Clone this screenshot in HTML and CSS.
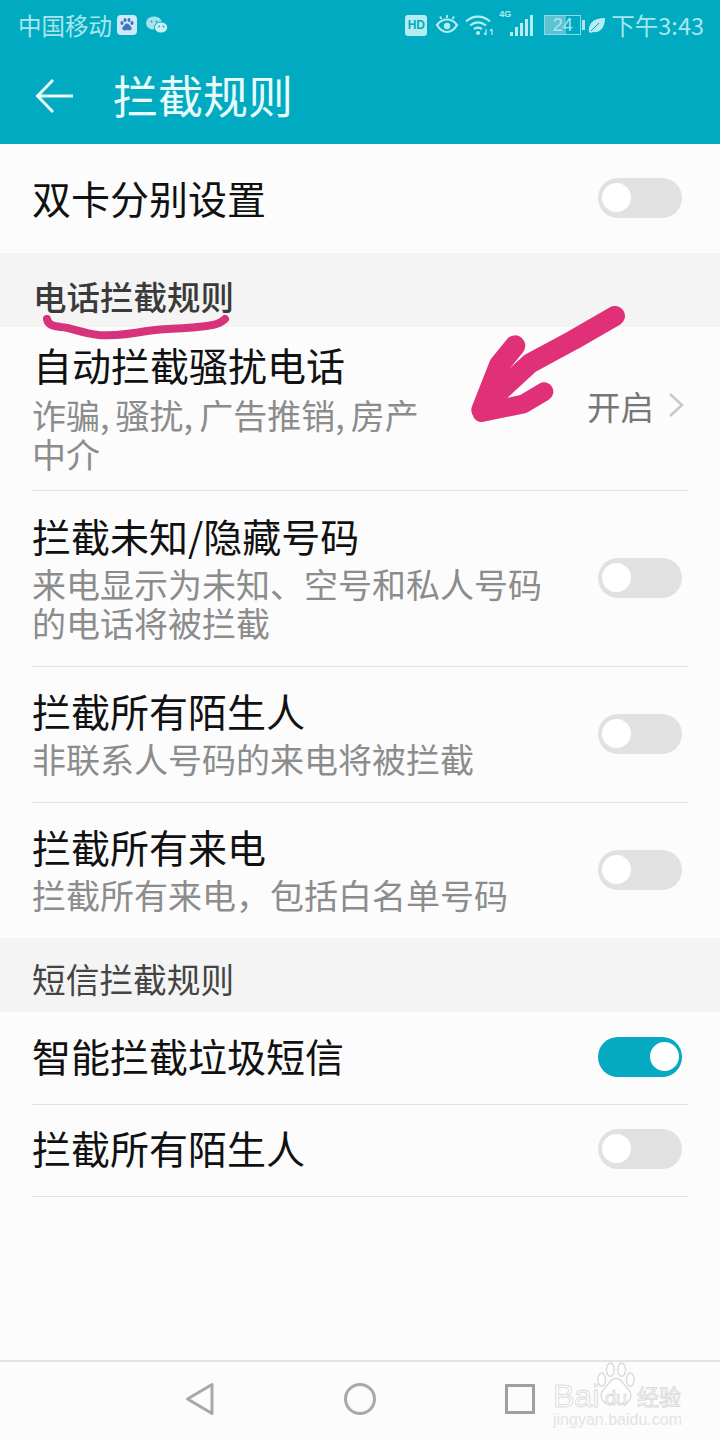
FILE: index.html
```html
<!DOCTYPE html>
<html lang="zh-CN">
<head>
  <meta charset="UTF-8">
  <title>拦截规则</title>
  <link rel="stylesheet" href="styles.css">
</head>
<body>

  <div class="phone">
    <header class="appbar">
      <div class="status">
        <div class="status-left">
          <span class="carrier">中国移动</span>
          <svg class="ic-baidu" width="20" height="20" viewBox="0 0 20 20">
            <rect width="20" height="20" rx="4" fill="#cfeaf6"/>
            <g fill="#3f74c4">
              <ellipse cx="5" cy="8" rx="1.6" ry="2.1"/>
              <ellipse cx="8" cy="5" rx="1.5" ry="2.1"/>
              <ellipse cx="12" cy="5" rx="1.5" ry="2.1"/>
              <ellipse cx="15" cy="8" rx="1.6" ry="2.1"/>
              <path d="M10 8.5c-2 0-2.5 2-4 3.2-1.3 1.2-.6 3.8 1.6 3.6 1 0 1.6-.4 2.4-.4s1.4.4 2.4.4c2.2.2 2.9-2.4 1.6-3.6-1.5-1.2-2-3.2-4-3.2z"/>
            </g>
          </svg>
          <svg class="ic-wechat" width="22" height="18" viewBox="0 0 22 18">
            <ellipse cx="8" cy="7" rx="8" ry="6.6" fill="#a7e3ea"/>
            <ellipse cx="15" cy="11.5" rx="6.6" ry="5.6" fill="#c9eff3" stroke="#00abc1" stroke-width="1"/>
            <circle cx="5.5" cy="5.5" r="1" fill="#00abc1"/>
            <circle cx="10.5" cy="5.5" r="1" fill="#00abc1"/>
            <circle cx="13" cy="10.5" r=".9" fill="#00abc1"/>
            <circle cx="17.5" cy="10.5" r=".9" fill="#00abc1"/>
          </svg>
        </div>
        <div class="status-right">
          <span class="hd">HD</span>
          <svg width="24" height="22" viewBox="0 0 24 22" fill="none" stroke="#b5ecf2" stroke-width="2.2">
            <path d="M2 11c3-4 6-5.500 10-5.500S19 7 22 11c-3 5-6 7-10 7s-7-2-10-7z"/>
            <circle cx="12" cy="12" r="3.200" fill="#b5ecf2" stroke="none"/>
            <path d="M12 1v3M5 2.500l1.500 2.500M19 2.500L17.500 5" stroke-width="1.800"/>
          </svg>
          <svg class="ic-wifi" width="28" height="22" viewBox="0 0 28 22" fill="none" stroke="#b5ecf2" stroke-width="2.200">
            <path d="M1 7.500c7-6.500 17-6.500 24 0"/>
            <path d="M5 11.500c5-4 11-4 16 0"/>
            <path d="M9 15c3-2 5-2 8 0"/>
            <circle cx="13" cy="19" r="2" fill="#b5ecf2" stroke="none"/>
            <path d="M21 15v6M19 19l2 2M27 15v6M25 17l2-2" stroke-width="1.200"/>
          </svg>
          <span class="net">
            <span class="net-g">4G</span>
            <svg width="24" height="22" viewBox="0 0 24 22" fill="#b5ecf2">
              <rect x="0" y="18" width="3" height="4"/>
              <rect x="5" y="13" width="3" height="9"/>
              <rect x="10" y="9" width="3" height="13"/>
              <rect x="15" y="5" width="3" height="17"/>
              <rect x="20" y="1" width="3" height="21"/>
            </svg>
          </span>
          <span class="battery"><span class="battery-num">24</span></span>
          <svg class="ic-leaf" width="18" height="18" viewBox="0 0 18 18">
            <path d="M1 16C0 8 5 2 17 2c0 10-5 15-12 14l-2 1z" fill="#b5ecf2"/>
            <path d="M3 15L11 7" stroke="#00abc1" stroke-width="1"/>
          </svg>
          <span class="clock">下午3:43</span>
        </div>
      </div>
      <div class="toolbar">
        <svg class="back" width="40" height="36" viewBox="0 0 40 36" fill="none" stroke="#e8fafc" stroke-width="3">
          <path d="M38 18H3M18 2L2.500 18 18 34"/>
        </svg>
        <h1>拦截规则</h1>
      </div>
    </header>

    <main class="list">
      <div class="row row-solo">
        <div class="row-title">双卡分别设置</div>
        <span class="switch"></span>
      </div>

      <div class="section section-first">电话拦截规则</div>

      <div class="row row-auto line">
        <div class="row-text">
          <div class="row-title">自动拦截骚扰电话</div>
          <div class="row-sub">诈骗, 骚扰, 广告推销, 房产<br>中介</div>
        </div>
        <div class="row-value">
          开启
          <svg width="16" height="26" viewBox="0 0 16 26" fill="none" stroke="#c8c8c8" stroke-width="2.500">
            <path d="M2 2l12 11L2 24"/>
          </svg>
        </div>
      </div>
      <div class="row row-two line">
        <div class="row-text">
          <div class="row-title">拦截未知/隐藏号码</div>
          <div class="row-sub">来电显示为未知、空号和私人号码<br>的电话将被拦截</div>
        </div>
        <span class="switch"></span>
      </div>
      <div class="row row-one line">
        <div class="row-text">
          <div class="row-title">拦截所有陌生人</div>
          <div class="row-sub">非联系人号码的来电将被拦截</div>
        </div>
        <span class="switch"></span>
      </div>
      <div class="row row-one row-last">
        <div class="row-text">
          <div class="row-title">拦截所有来电</div>
          <div class="row-sub">拦截所有来电，包括白名单号码</div>
        </div>
        <span class="switch"></span>
      </div>

      <div class="section section-sms">短信拦截规则</div>

      <div class="row row-plain line">
        <div class="row-title">智能拦截垃圾短信</div>
        <span class="switch on"></span>
      </div>
      <div class="row row-plain line">
        <div class="row-title">拦截所有陌生人</div>
        <span class="switch"></span>
      </div>
    </main>

    <nav class="navbar">
      <svg width="30" height="34" viewBox="0 0 30 34" fill="none" stroke="#a8a8a8" stroke-width="3" stroke-linejoin="round">
        <path d="M27 2.500v29L2.500 17z"/>
      </svg>
      <svg width="34" height="34" viewBox="0 0 34 34" fill="none" stroke="#a8a8a8" stroke-width="3">
        <circle cx="17" cy="17" r="14.500"/>
      </svg>
      <svg width="30" height="30" viewBox="0 0 30 30" fill="none" stroke="#a0a0a0" stroke-width="3">
        <rect x="1.500" y="1.500" width="27" height="27"/>
      </svg>
    </nav>

    <!-- pen marks drawn on top of the screenshot -->
    <svg class="marks" width="720" height="1440" viewBox="0 0 720 1440">
      <path d="M47 319c1 6 6 7 14 8 12 1 20 6 38 8 18 1 32-1 48-4 20-3 34-2 50-4 12-1 22-2 28-8" fill="none" stroke="#d6337c" stroke-width="8" stroke-linecap="round" stroke-linejoin="round"/>
      <g transform="translate(440 290) scale(.3333)" fill="none" stroke="#e03078" stroke-linecap="round" stroke-linejoin="round">
        <path d="M525 78L400 150 270 220 135 345" stroke-width="60"/>
        <path d="M225 167L178 225 125 360" stroke-width="62"/>
        <path d="M312 305L250 342 125 368" stroke-width="56"/>
      </g>
    </svg>

    <div class="watermark">
      <svg class="paw" width="40" height="46" viewBox="0 0 42 42" preserveAspectRatio="none" fill="#fff" stroke="#dcdcdc" stroke-width="1.500">
        <ellipse cx="6" cy="16" rx="4" ry="6"/>
        <ellipse cx="15" cy="7" rx="4" ry="6"/>
        <ellipse cx="27" cy="7" rx="4" ry="6"/>
        <ellipse cx="36" cy="16" rx="4" ry="6"/>
        <path d="M21 15c-6 0-8 6-13 10-5 5-2 13 6 13 3 0 5-1 7-1s4 1 7 1c8 0 11-8 6-13-5-4-7-10-13-10z"/>
      </svg>
      <span class="wm-bai">Bai</span>
      <span class="wm-du">du</span>
      <span class="wm-jy">经验</span>
      <div class="wm-url">jingyan.baidu.com</div>
    </div>
  </div>

</body>
</html>
```

FILE: styles.css
```css
* {
  box-sizing: border-box;
}

html, body {
  margin: 0;
  height: 100%;
}

body {
  font-family: "Noto Sans CJK SC", "Noto Sans", sans-serif;
  background-color: #fcfcfc;
  color: #111;
}

.phone {
  position: relative;
  width: 720px;
  height: 1440px;
  overflow: hidden;
  display: flex;
  flex-direction: column;
}

/* top bar */
.appbar {
  height: 144px;
  background-color: #00abc1;
  flex-shrink: 0;
}

.status {
  height: 48px;
  padding: 2px 16px 0 18px;
  display: flex;
  justify-content: space-between;
  align-items: center;
  color: #a9e6ed;
  font-size: 23.5px;
}

.status-left,
.status-right {
  display: flex;
  align-items: center;
}

.carrier {
  margin-right: 5px;
}

.ic-wechat {
  margin-left: 9px;
}

.status-right {
  gap: 8px;
}

.hd {
  width: 22px;
  height: 21px;
  border-radius: 3px;
  background-color: #b5ecf2;
  color: #00abc1;
  font-family: "Liberation Sans", sans-serif;
  font-size: 12px;
  font-weight: bold;
  line-height: 21px;
  text-align: center;
}

.ic-wifi {
  margin-left: -2px;
}

.net {
  position: relative;
  padding-left: 9px;
}

.net svg {
  display: block;
}

.net-g {
  position: absolute;
  left: -2px;
  top: -5px;
  font-family: "Liberation Sans", sans-serif;
  font-size: 9px;
  font-weight: bold;
  color: #b5ecf2;
}

.battery {
  position: relative;
  width: 37px;
  height: 20px;
  margin-left: 2px;
  border: 1px solid #8fd8e2;
  background: linear-gradient(to right, #5cc3d3 60%, transparent 60%);
  display: flex;
  align-items: center;
  justify-content: center;
}

.battery::after {
  content: "";
  position: absolute;
  right: -5px;
  top: 4px;
  width: 3px;
  height: 10px;
  background-color: #a9e6ed;
}

.battery-num {
  font-family: "Liberation Sans", sans-serif;
  font-size: 18px;
  color: #a9e6ed;
}

.ic-leaf {
  margin-left: -1px;
  margin-right: -3px;
}

.toolbar {
  height: 96px;
  display: flex;
  align-items: center;
  padding-left: 35px;
}

.back {
  margin-right: 38px;
}

.toolbar h1 {
  margin: 0 0 4px;
  font-size: 45px;
  font-weight: 400;
  color: #e8fafc;
}

/* list */
.list {
  flex: 1;
}

.row {
  margin: 0 32px;
  display: flex;
  justify-content: space-between;
  align-items: center;
}

.line {
  border-bottom: 1px solid #e2e2e2;
}

.row-solo {
  height: 109px;
}

.row-solo .row-title {
  padding-bottom: 4px;
}

.row-auto {
  height: 164px;
}

.row-auto .row-title {
  margin-left: 1px;
}

.row-auto .row-sub {
  margin-top: 3px;
  word-spacing: -1.5px;
}

.row-two {
  height: 176px;
}

.row-one {
  height: 136px;
}

.row-last {
  height: 135px;
}

.row-plain {
  height: 92.5px;
}

.row-plain .row-title {
  padding-bottom: 6px;
}

.row-title {
  font-size: 39px;
  line-height: 40px;
  padding-bottom: 8px;
  color: #111;
}

.row-sub {
  margin-top: 1px;
  font-size: 34px;
  line-height: 39.5px;
  color: #8c8c8c;
}

.row-value {
  display: flex;
  align-items: center;
  gap: 14px;
  font-size: 33.5px;
  color: #777;
  margin-right: 4px;
  margin-bottom: 7px;
}

.section {
  height: 74px;
  padding: 0 32px;
  display: flex;
  align-items: center;
  background-color: #f4f4f4;
  font-size: 33.7px;
  color: #444;
}

.section-first {
  padding-left: 33px;
  padding-top: 26px;
  padding-bottom: 16px;
  color: #3a3a3a;
  font-size: 33.5px;
  font-weight: 500;
}

.section-sms {
  padding-top: 6px;
}

.switch {
  position: relative;
  width: 84px;
  height: 40px;
  margin-right: 6px;
  margin-bottom: 2px;
  border-radius: 20px;
  background-color: #e1e1e1;
  flex-shrink: 0;
}

.switch::after {
  content: "";
  position: absolute;
  left: 4px;
  top: 5px;
  width: 29px;
  height: 29px;
  border-radius: 50%;
  background-color: #fff;
}

.switch.on {
  background-color: #05a9c1;
}

.switch.on::after {
  left: 52px;
}

/* bottom nav */
.navbar {
  height: 80px;
  margin-top: auto;
  flex-shrink: 0;
  border-top: 2px solid #e4e4e4;
  display: flex;
  align-items: center;
  justify-content: space-between;
  padding: 0 185px 4px 185px;
  background-color: #fcfcfc;
}

/* overlays */
.marks {
  position: absolute;
  left: 0;
  top: 0;
  pointer-events: none;
}

.watermark {
  position: absolute;
  left: 553px;
  top: 1362px;
  width: 128px;
  height: 66px;
  font-family: "Liberation Sans", sans-serif;
  color: #fff;
  -webkit-text-stroke: 1px #dcdcdc;
}

.paw {
  position: absolute;
  left: 43px;
  top: 0;
}

.wm-bai {
  position: absolute;
  left: 0;
  top: 19px;
  font-size: 32px;
  line-height: 30px;
}

.wm-du {
  position: absolute;
  left: 52px;
  top: 26px;
  font-size: 20px;
  line-height: 20px;
}

.wm-jy {
  position: absolute;
  left: 84px;
  top: 18px;
  font-family: "Noto Sans CJK SC", sans-serif;
  font-size: 22px;
  line-height: 30px;
}

.wm-url {
  position: absolute;
  left: 0;
  top: 49px;
  font-size: 16px;
  line-height: 18px;
  white-space: nowrap;
  color: #e4e4e4;
  -webkit-text-stroke: 0;
}
```
